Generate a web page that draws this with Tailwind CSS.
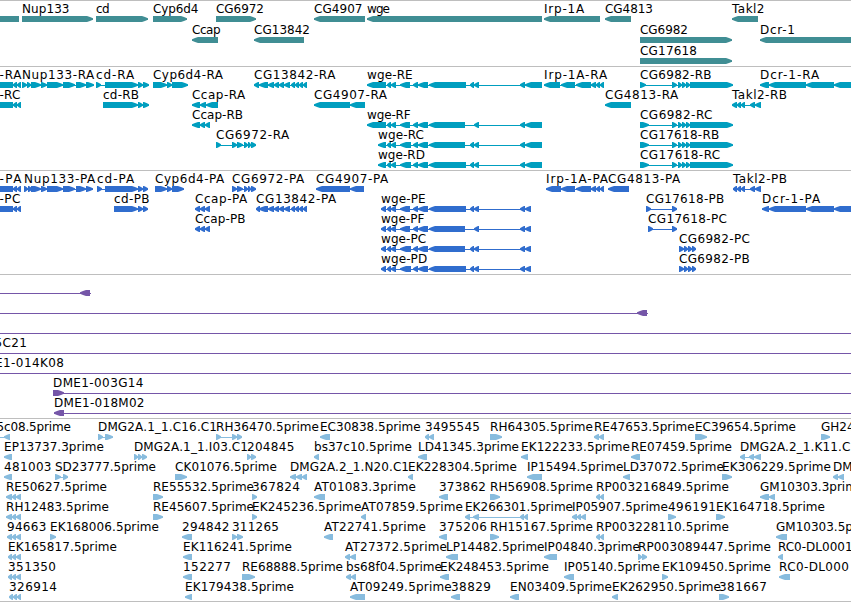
<!DOCTYPE html>
<html lang="en">
<head>
  <meta charset="UTF-8" />
  <meta name="viewport" content="width=device-width, initial-scale=1.0" />
  <title>Genome Browser</title>
  <script src="https://cdn.jsdelivr.net/npm/@tailwindcss/browser@4"></script>
</head>
<body class="bg-white text-black font-['DejaVu_Sans',sans-serif] text-[12px] overflow-hidden">
  <main class="flex flex-col w-[851px] h-[602px] overflow-hidden border-b border-[#bebebe]">
    <!-- Genes -->
    <section id="genes" class="flex flex-col h-[66px] shrink-0 border-t border-[#bebebe] text-[#408e94]"></section>
    <!-- Transcripts -->
    <section id="transcripts" class="flex flex-col h-[104px] shrink-0 border-t border-[#bebebe] text-[#009ebf]"></section>
    <!-- Coding sequences -->
    <section id="proteins" class="flex flex-col h-[104px] shrink-0 border-t border-[#bebebe] text-[#306dce]"></section>
    <!-- BAC ends -->
    <section id="clones" class="flex flex-col h-[144px] shrink-0 border-t border-[#bebebe] text-[#7556a8]"></section>
    <!-- ESTs -->
    <section id="ests" class="flex flex-col h-[183px] shrink-0 border-t border-[#bebebe] text-[#88bcde]"></section>
  </main>

  <script>
    // Each feature: label@label end | strand | exons "start-end ..." | optional label x | optional connector "start,end"
    const NUP = '31-41 41-47 47-63 63-75 76-86';
    const CG13 = '259-268 268-274 274-279 279-284 284-290 291-295 295-299 299-303 303-307';
    const WGE_A = '387-391 391-396 400-410 413-418 418-428';
    const WGE_B = '387-391 391-396 400-411 413-418 418-428';
    const IRP = '561-575 576-591 591-596 596-600 600-604';
    const CG69 = '672-677 678-682 682-686 686-690 690-733';
    const DCR = '769-806 806-834 834-870';
    const TAK = '737-741 741-745 750-755 755-761';

    const tracks = {
      genes: { rowClass: 'h-[21px]', rows: [
        ['|<|_30-19', 'Nup133@69.5|>|22-93', 'cd@109.5|>|96-148', 'Cyp6d4@198.5|>|153-187', 'CG6972@264|>|216-256', 'CG4907@362.5|<|314-365', 'wge@390|<|367-542', 'Irp-1A@584.2|<|544-600', 'CG4813@653|<|605-631', 'Takl2@764.5|<|732-758'],
        ['Ccap@220.5|<|192-218', 'CG13842@310|<|254-304', 'CG6982@688|>|640-732', 'Dcr-1@795|<|760-880'],
        ['CG17618@697|>|640-732'],
      ]},
      transcripts: { rows: [
        ['-RA@21.5|<|_30-13 13-17 17-21|-0.5', `Nup133-RA@94.3|>|22-27 27-31 ${NUP} 86-94`, 'cd-RA@134.3|>|96-101 105-138 138-143 143-149', 'Cyp6d4-RA@223|>|153-167 167-172 172-188', `CG13842-RA@335.5|<|254-259 ${CG13}`, `wge-RE@412.7|<|367-386 ${WGE_A} 429-466 470-474 474-479 520-525 525-542`, `Irp-1A-RA@607.2|<|544-560 ${IRP}`, `CG6982-RB@711.5|>|640-646 ${CG69}`, `Dcr-1-RA@819.3|<|760-769 ${DCR}`],
        ['-RC@20.5|<|_30-13 13-17 17-21|-0.5', 'cd-RB@139|>|103-138 138-143 143-149', 'Ccap-RA@245.3|<|192-200 200-206 206-218', 'CG4907-RA@387|<|314-350 350-365', 'CG4813-RA@678.3|<|605-631', `Takl2-RB@787|<|732-737 ${TAK}`],
        ['Ccap-RB@243|<|192-200 200-205 205-210', `wge-RF@410.7|<|367-386 ${WGE_A} 429-465 474-479 520-525 525-542`, `CG6982-RC@712.5|>|640-649 ${CG69}`],
        ['CG6972-RA@289.3|>|216-221 232-237 237-243 244-248 248-251 251-256', `wge-RC@424|<|378-386 ${WGE_B} 429-465 470-474 474-479 520-525 525-542`, `CG17618-RB@719.3|>|640-649 ${CG69}`],
        [`wge-RD@425|<|378-386 ${WGE_B} 429-466 470-474 474-479 520-525 525-542`, `CG17618-RC@720.2|>|640-649 ${CG69}`],
      ]},
      proteins: { rows: [
        ['-PA@21.5|<|_30-13 13-17 17-21|-0.5', `Nup133-PA@95.3|>|24-28 28-32 ${NUP} 86-93`, 'cd-PA@134.3|>|97-102 105-138 138-143 143-148', 'Cyp6d4-PA@224.3|>|155-167 167-172 172-184', 'CG6972-PA@304.3|>|232-237 237-243 244-248 248-251 251-256', 'CG4907-PA@388.3|<|316-350 350-364', `Irp-1A-PA@608|<|546-561 ${IRP}`, 'CG4813-PA@680.3|<|608-629', `Takl2-PB@787|<|733-737 ${TAK}`],
        ['-PC@20.5|<|_30-13 13-17 17-21|-0.5', 'cd-PB@149.5|>|114-138 138-143 143-148', 'Ccap-PA@247.3|<|195-200 200-205 205-210', `CG13842-PA@336.3|<|256-260 ${CG13}`, `wge-PE@425.7|<|381-386 ${WGE_A} 429-466 470-474 474-479 520-525 525-531`, 'CG17618-PB@724.3|>|646-651 672-677', `Dcr-1-PA@820.3|<|762-769 ${DCR}`],
        ['Ccap-PB@245.6|<|195-200 200-205 205-210', `wge-PF@424.3|<|381-386 ${WGE_A} 429-465 474-479 520-525 525-531`, 'CG17618-PC@727|>|648-653 672-677'],
        [`wge-PC@426.2|<|381-386 ${WGE_B} 429-465 470-474 474-479 520-525 525-531`, 'CG6982-PC@750|>|679-684 684-688 688-692 692-696'],
        [`wge-PD@427.2|<|381-386 ${WGE_B} 429-466 470-474 474-479 520-525 525-531`, 'CG6982-PB@749.7|>|679-684 684-688 688-692 692-696'],
      ]},
      clones: { rows: [
        ['|<|80-90||0,91'],
        ['|<|637-647||0,648'],
        ['|<|||0,851'],
        ['5C21@27|<||-5.5|0,851'],
        ['E1-014K08@64|<||-5|0,851'],
        ['DME1-003G14@143.5|>|53-64||53,851'],
        ['DME1-018M02@144.5|<|54-64||54,851'],
      ]},
      ests: { rows: [
        ['5c08.5prime@71|<|4-10|-3.5|0,10', 'DMG2A.1_1.C16.C1@217|>|98-103 105-113', 'RH36470.5prime@319|>|216-221 232-237 237-242', 'EC30838.5prime@420.7|<|320-330', '3495545@480|<|425-429 429-434', 'RH64305.5prime@593|>|490-502', 'RE47653.5prime@694.7|<|594-599 599-604', 'EC39654.5prime@796|>|695-707', 'GH24|>|821-830'],
        ['EP13737.3prime@104|<|4-12', 'DMG2A.1_1.I03.C1@248|>|134-138 138-142 142-147', '204845@294.3|>|247-251 251-256', 'bs37c10.5prime@411.8|<|314-319', 'LD41345.3prime@519|<|418-427', 'EK122233.5prime@630|<|521-528', 'RE07459.5prime@732|<|631-640', 'DMG2A.2_1.K11.C@850.3|<|740-745 749-754 754-761'],
        ['481003@51.5|<|4-12', 'SD23777.5prime@156|>|55-61 63-68', 'CK01076.5prime@277|>|175-187', 'DMG2A.2_1.N20.C1@409|<|290-296 296-302 302-307', 'EK228304.5prime@517|<|408-413', 'IP15494.5prime@623.3|<|527-542', 'LD37072.5prime@723.8|<|623-630', 'EK306229.5prime@831|>|722-732', 'DM|<|833-838 838-844'],
        ['RE50627.5prime@107|<|6-12 12-16 16-21', 'RE55532.5prime@254|>|153-163', '367824@300|>|252-257', 'AT01083.3prime@416|<|314-325', '373862@486|<|439-448', 'RH56908.5prime@593|>|490-500', 'RP003216849.5prime@729|<|596-600 600-604', 'GM10303.3prime|<|760-769 769-775'],
        ['RH12483.5prime@109|<|6-12 12-16 16-21', 'RE45607.5prime@254|>|153-163', 'EK245236.5prime@361.3|>|252-257', 'AT07859.5prime@463|<|361-366', 'EK266301.5prime@573|<|465-470 473-479 520-524 524-528', 'IP05907.5prime@668|<|572-577 577-581 581-586', '496191@716|>|668-676', 'EK164718.5prime@825|>|716-725'],
        ['94663@46.3|<|7-12 12-16 16-21', 'EK168006.5prime@159|>|50-56', '294842@229.5|<|182-192', '311265@279|>|232-237 237-243', 'AT22741.5prime@426|<|324-333', '375206@487|<|439-447', 'RH15167.5prime@593|>|490-499', 'RP003228110.5prime@729|<|596-600 600-604', 'GM10303.5p|<|776-787'],
        ['EK165817.5prime@117|<|8-12 12-16 16-21', 'EK116241.5prime@292|<|183-192', 'AT27372.5prime@447|<|345-350 350-356', 'LP14482.5prime@544.5|<|446-458', 'IP04840.3prime@640|<|544-557', 'RP003089447.5prime@771|>|638-642 642-647', 'RC0-DL0001|<|778-783'],
        ['351350@56|<|8-12 12-16 16-21', '152277@231|<|183-192', 'RE68888.5prime@343|>|242-255', 'bs68f04.5prime@442|<|346-351 351-356', 'EK248453.5prime@549|<|440-449', 'IP05140.5prime@660|<|564-574', 'EK109450.5prime@771|>|662-668', 'RC0-DL000@849|<|779-790'],
        ['326914@57|<|9-13 13-17 17-21', 'EK179438.5prime@294|<|185-192', 'AT09249.5prime@451.7|<|350-365', '38829@491|<|451-460', 'EN03409.5prime@612|<|510-519', 'EK262950.5prime@721|<|612-618', '381667@767|>|719-729'],
      ]},
    };

    // Exon box with a pointed end in the direction of the strand
    function exon(start, end, strand) {
      const dir = strand === '>' ? 1 : -1;
      const tip = strand === '>' ? end : start;
      const back = strand === '>' ? start : end;
      const width = end - start;
      // short exons are all head, with a little body left at the back
      const head = width > 7 ? 6 : width - 1;
      const neck = tip - dir * head;
      const mid = tip - dir * head * 0.5;
      return `<polygon points="${back},15 ${neck},15 ${mid},16 ${tip},17.3 ${tip},18.7 ${mid},20 ${neck},21 ${back},21"/>`;
    }

    function feature(spec) {
      const [title, strand, exonSpec, labelX, connector] = spec.split('|');
      const [label, labelEnd] = title.split('@');
      const exons = exonSpec ? exonSpec.split(' ').map(e => e.split('-').map(n => Number(n.replace('_', '-')))) : [];
      const [from, to] = connector ? connector.split(',') : [exons[0][0], exons[exons.length - 1][1]];
      const x = labelX ? Number(labelX) : exons.length ? exons[0][0] : 0;
      const fit = labelEnd ? `textLength="${(Number(labelEnd) - x).toFixed(1)}"` : '';
      return `<rect x="${from}" y="18" width="${to - from}" height="1"/>`
        + exons.map(([a, b]) => exon(a, b, strand)).join('')
        + (label ? `<text x="${x}" y="12" ${fit} class="fill-black">${label}</text>` : '');
    }

    for (const [id, track] of Object.entries(tracks)) {
      document.getElementById(id).innerHTML = track.rows.map(row => `
        <svg class="block w-[851px] shrink-0 overflow-visible fill-current ${track.rowClass || 'h-[20px]'}">${row.map(feature).join('')}</svg>
      `).join('');
    }
  </script>
</body>
</html>
